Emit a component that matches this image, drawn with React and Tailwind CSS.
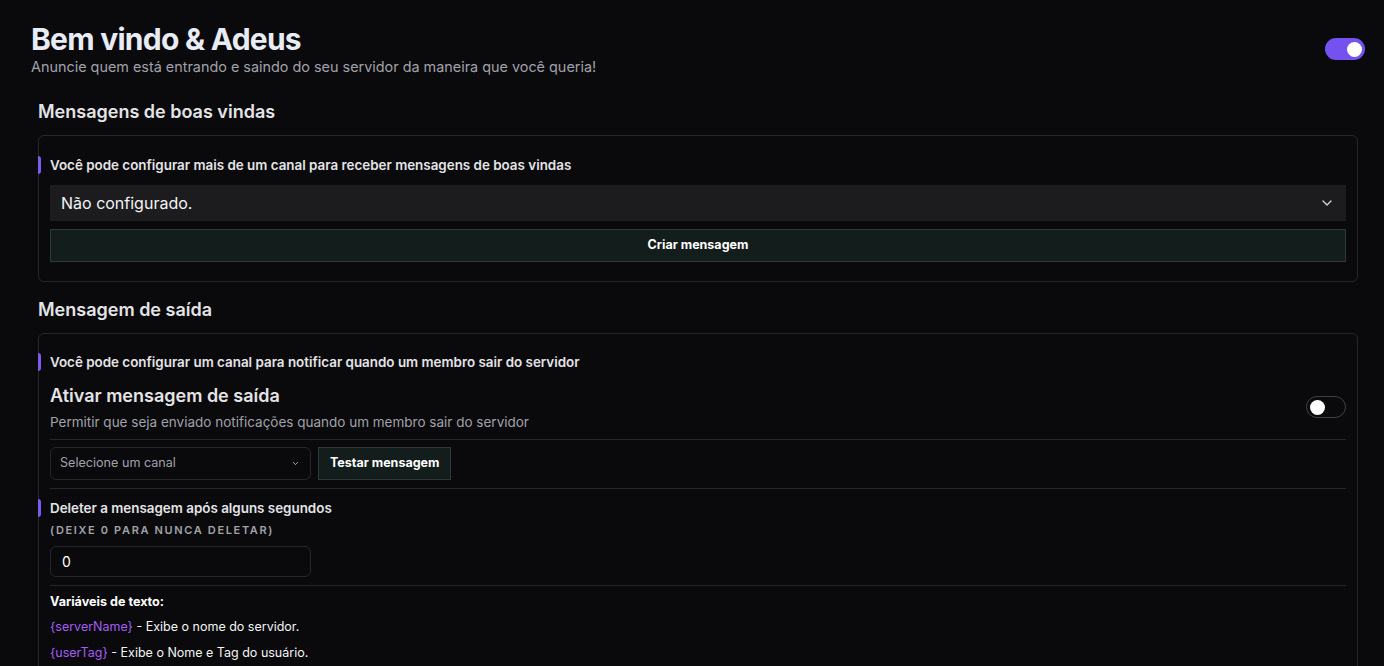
import React from 'react';

const Accent = ({ children, className = '' }) => (
  <div className={`-ml-[12px] flex items-center gap-[9px] ${className}`}>
    <span className="w-[3px] h-[18px] bg-[#7c5cf0] rounded-r-sm" />
    <span className="text-[13.4px] leading-5 font-semibold text-[#e4e4e7]">{children}</span>
  </div>
);

const Chevron = ({ className }) => (
  <svg viewBox="0 0 24 24" fill="none" stroke="currentColor" strokeWidth="2" strokeLinecap="round" strokeLinejoin="round" className={className}>
    <path d="m6 9 6 6 6-6" />
  </svg>
);

const Toggle = ({ on }) =>
  on ? (
    <div className="w-10 h-[22px] rounded-full bg-[#7452f0] flex items-center justify-end px-[3px]">
      <span className="w-[15px] h-[15px] rounded-full bg-white" />
    </div>
  ) : (
    <div className="w-10 h-[22px] rounded-full border border-[#3f3f46] flex items-center px-[3px]">
      <span className="w-[15px] h-[15px] rounded-full bg-white" />
    </div>
  );

export default function App() {
  return (
    <div className="min-h-screen bg-[#0a0a0c] text-white pl-[31px] pr-[19px] pt-[21px] pb-10" style={{ fontFamily: 'Inter, "Noto Sans", sans-serif' }}>
      <header className="flex items-center justify-between">
        <div>
          <h1 className="text-3xl leading-9 font-bold tracking-tight text-[#e8ecf4]">Bem vindo &amp; Adeus</h1>
          <p className="text-[14.4px] leading-5 text-[#a1a1aa]">Anuncie quem está entrando e saindo do seu servidor da maneira que você queria!</p>
        </div>
        <Toggle on />
      </header>

      <section className="mx-[7px] mt-[21px]">
        <h2 className="text-lg leading-7 font-semibold text-[#e4e4e7] mb-[9px]">Mensagens de boas vindas</h2>
        <div className="border border-[#27272a] rounded-md px-[11px] pt-[19px] pb-[19px]">
          <Accent>Você pode configurar mais de um canal para receber mensagens de boas vindas</Accent>
          <div className="mt-[10px] h-9 bg-[#1c1c1f] flex items-center justify-between px-[11px]">
            <span className="text-base text-[#f4f4f5]">Não configurado.</span>
            <Chevron className="w-4 h-4 text-[#d4d4d8]" />
          </div>
          <button className="mt-2 w-full h-[33px] bg-[#131d1c] border border-[#2e3a38] text-[12.5px] font-bold text-white">
            Criar mensagem
          </button>
        </div>
      </section>

      <section className="mx-[7px] mt-[14px]">
        <h2 className="text-lg leading-7 font-semibold text-[#e4e4e7] mb-[9px]">Mensagem de saída</h2>
        <div className="border border-[#27272a] rounded-md px-[11px] pt-[18px] pb-6">
          <Accent>Você pode configurar um canal para notificar quando um membro sair do servidor</Accent>

          <div className="mt-[10px] flex items-center justify-between pb-[7px] border-b border-[#27272a]">
            <div>
              <h3 className="text-lg leading-7 font-semibold text-[#e4e4e7]">Ativar mensagem de saída</h3>
              <p className="mt-[2px] text-[13.5px] leading-5 text-[#a1a1aa]">Permitir que seja enviado notificações quando um membro sair do servidor</p>
            </div>
            <Toggle />
          </div>

          <div className="pt-[7px] pb-2 flex items-center gap-[7px] border-b border-[#27272a]">
            <div className="w-[261px] h-[33px] rounded-md border border-[#27272a] flex items-center justify-between pl-[9px] pr-[10px]">
              <span className="text-[12.6px] text-[#a1a1aa]">Selecione um canal</span>
              <Chevron className="w-[9px] h-[9px] text-[#d4d4d8]" />
            </div>
            <button className="h-[33px] px-[11px] bg-[#131d1c] border border-[#2e3a38] text-[12.5px] font-bold text-white">
              Testar mensagem
            </button>
          </div>

          <div className="pt-[9px] pb-2 border-b border-[#27272a]">
            <Accent>Deleter a mensagem após alguns segundos</Accent>
            <p className="mt-1 text-[11px] leading-4 font-semibold tracking-[0.15em] text-[#a1a1aa]">(DEIXE 0 PARA NUNCA DELETAR)</p>
            <div className="mt-2 w-[261px] h-[31px] rounded-md border border-[#27272a] flex items-center px-[11px]">
              <span className="text-sm text-white">0</span>
            </div>
          </div>

          <div className="pt-[6px]">
            <p className="text-[12.6px] leading-5 font-bold text-white">Variáveis de texto:</p>
            <p className="mt-[5px] text-[12.5px] leading-5 text-[#f4f4f5]">
              <span className="text-[#a55cf5]">{'{serverName}'}</span> - Exibe o nome do servidor.
            </p>
            <p className="mt-[6px] text-[12.5px] leading-5 text-[#f4f4f5]">
              <span className="text-[#a55cf5]">{'{userTag}'}</span> - Exibe o Nome e Tag do usuário.
            </p>
          </div>
        </div>
      </section>
    </div>
  );
}
